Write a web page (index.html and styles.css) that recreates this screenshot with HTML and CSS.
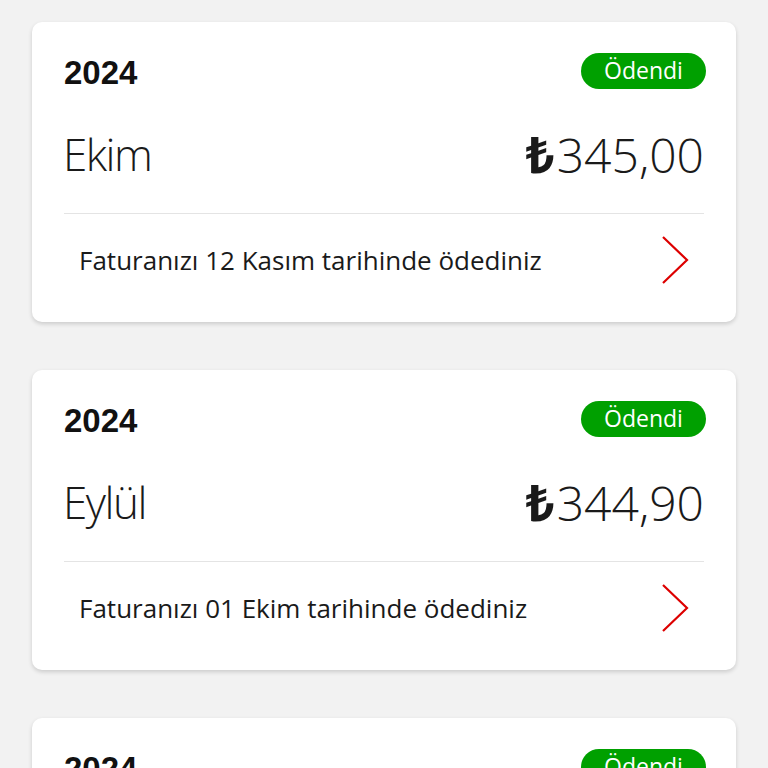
FILE: index.html
```html
<!DOCTYPE html>
<html lang="tr">

<head>
    <meta charset="UTF-8">
    <meta name="viewport" content="width=device-width, initial-scale=1.0">
    <title>Faturalarım</title>
    <link rel="stylesheet" href="styles.css">
</head>

<body>
    <div class="list">
        <div class="bill">
            <div class="bill-head">
                <div class="year">2024</div>
                <div class="status">Ödendi</div>
            </div>
            <div class="bill-main">
                <div class="month">Ekim</div>
                <div class="amount"><span class="lira">₺</span>345,00</div>
            </div>
            <div class="bill-foot">
                <div class="note">Faturanızı 12 Kasım tarihinde ödediniz</div>
                <svg class="chevron" width="28" height="50" viewBox="0 0 28 50">
                    <path d="M2 2 L26 25 L2 48" fill="none" stroke="#dd0000" stroke-width="2.2" />
                </svg>
            </div>
        </div>

        <div class="bill">
            <div class="bill-head">
                <div class="year">2024</div>
                <div class="status">Ödendi</div>
            </div>
            <div class="bill-main">
                <div class="month">Eylül</div>
                <div class="amount"><span class="lira">₺</span>344,90</div>
            </div>
            <div class="bill-foot">
                <div class="note">Faturanızı 01 Ekim tarihinde ödediniz</div>
                <svg class="chevron" width="28" height="50" viewBox="0 0 28 50">
                    <path d="M2 2 L26 25 L2 48" fill="none" stroke="#dd0000" stroke-width="2.2" />
                </svg>
            </div>
        </div>

        <div class="bill">
            <div class="bill-head">
                <div class="year">2024</div>
                <div class="status">Ödendi</div>
            </div>
            <div class="bill-main">
                <div class="month">Ağustos</div>
                <div class="amount"><span class="lira">₺</span>344,90</div>
            </div>
            <div class="bill-foot">
                <div class="note">Faturanızı 02 Eylül tarihinde ödediniz</div>
                <svg class="chevron" width="28" height="50" viewBox="0 0 28 50">
                    <path d="M2 2 L26 25 L2 48" fill="none" stroke="#dd0000" stroke-width="2.2" />
                </svg>
            </div>
        </div>
    </div>
</body>

</html>
```

FILE: styles.css
```css
body {
    margin: 0;
    background: #f2f2f2;
    font-family: 'Open Sans', 'Noto Sans', sans-serif;
    color: #1a1a1a;
    height: 768px;
    overflow: hidden;
}

.list {
    padding: 22px 32px;
    display: flex;
    flex-direction: column;
    gap: 48px;
}

.bill {
    background: #fff;
    border-radius: 10px;
    box-shadow: 0 2px 4px rgba(0, 0, 0, 0.16);
    padding: 31px 32px 15px;
    height: 300px;
    box-sizing: border-box;
}

.bill-head {
    display: flex;
    justify-content: space-between;
    align-items: center;
    height: 36px;
}

.year {
    font-family: 'Liberation Sans', sans-serif;
    font-weight: bold;
    font-size: 33px;
    color: #111;
    padding-top: 4px;
}

.status {
    background: #00a000;
    color: #fff;
    border-radius: 18px;
    height: 36px;
    line-height: 34px;
    width: 125px;
    text-align: center;
    font-size: 23px;
    margin-right: -2px;
}

.bill-main {
    display: flex;
    justify-content: space-between;
    align-items: center;
    height: 125px;
    padding-top: 5px;
    box-sizing: border-box;
    border-bottom: 1px solid #e4e4e4;
}

.month {
    font-size: 44px;
    font-weight: 300;
    letter-spacing: -1.5px;
    margin-left: -1px;
}

.amount {
    font-size: 48px;
    font-weight: 300;
    letter-spacing: 0;
}

.lira {
    font-weight: 700;
    font-size: 50px;
    margin-right: 2px;
}

.bill-foot {
    display: flex;
    justify-content: space-between;
    align-items: center;
    height: 92px;
    padding: 0 15px 0 15px;
}

.note {
    font-size: 26px;
    color: #1a1a1a;
}

.chevron {
    display: block;
}
```
